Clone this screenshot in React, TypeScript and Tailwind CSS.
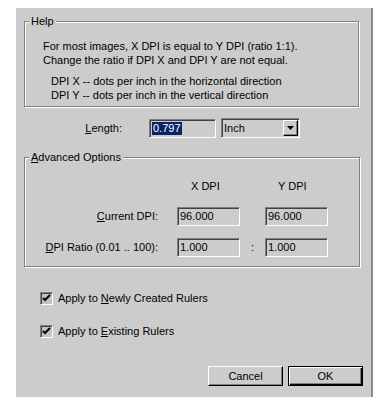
import React from "react";

const sunken =
  "border border-t-[#808080] border-l-[#808080] border-b-white border-r-white shadow-[inset_1px_1px_0_#404040]";

const GroupBox: React.FC<{
  label: React.ReactNode;
  className?: string;
  children?: React.ReactNode;
}> = ({ label, className, children }) => (
  <div
    className={`relative border border-[#808080] shadow-[inset_1px_1px_0_#fff,1px_1px_0_#fff] ${className ?? ""}`}
  >
    <span className="absolute -top-[8px] left-[4px] bg-[#cccccc] px-[2px] leading-[14px]">
      {label}
    </span>
    {children}
  </div>
);

const Field: React.FC<{ value: string; className?: string }> = ({
  value,
  className,
}) => (
  <div
    className={`${sunken} flex items-center pl-[2px] leading-[13px] ${className ?? ""}`}
  >
    {value}
  </div>
);

const CheckRow: React.FC<{ children: React.ReactNode; className?: string }> = ({
  children,
  className,
}) => (
  <div className={`flex items-center gap-[5px] ml-[24px] ${className ?? ""}`}>
    <div
      className={`${sunken} w-[13px] h-[13px] bg-[#c4c4c4] flex items-center justify-center`}
    >
      <svg width="9" height="9" viewBox="0 0 9 9">
        <path d="M1 4 L3 6 L8 1" stroke="#000" strokeWidth="2" fill="none" />
      </svg>
    </div>
    <span className="leading-[14px]">{children}</span>
  </div>
);

export default function App() {
  return (
    <div className="min-h-screen bg-white pt-[8px] pl-[16px] font-['Liberation_Sans',Arial,sans-serif] text-[11px] text-black">
      <div className="w-[357px] h-[389px] bg-[#cccccc] border-r-2 border-[#8a8a8a] flex flex-col">
        {/* Help */}
        <GroupBox label="Help" className="mt-[13px] ml-[8px] w-[335px] h-[86px]">
          <div className="pt-[17px] pl-[18px] leading-[14px]">
            <p>For most images, X DPI is equal to Y DPI (ratio 1:1).</p>
            <p>Change the ratio if DPI X and DPI Y are not equal.</p>
            <div className="mt-[7px] pl-[8px]">
              <p>DPI X -- dots per inch in the horizontal direction</p>
              <p>DPI Y -- dots per inch in the vertical direction</p>
            </div>
          </div>
        </GroupBox>

        {/* Length */}
        <div className="mt-[11px] flex items-center h-[20px]">
          <span className="w-[106px] text-right">
            <u>L</u>ength:
          </span>
          <div className={`${sunken} ml-[27px] w-[67px] h-[19px] flex items-center pl-[2px]`}>
            <span className="bg-[#0a246a] text-white leading-[13px] px-[1px]">0.797</span>
          </div>
          <div className={`${sunken} ml-[5px] w-[79px] h-[20px] flex items-center justify-between pl-[2px] pr-[1px]`}>
            <span>Inch</span>
            <div className="w-[15px] h-[16px] border border-t-white border-l-white border-r-black border-b-black shadow-[inset_-1px_-1px_0_#808080] bg-[#cccccc] flex items-center justify-center">
              <svg width="7" height="4" viewBox="0 0 7 4">
                <path d="M0 0 H7 L3.5 4 Z" fill="#000" />
              </svg>
            </div>
          </div>
        </div>

        {/* Advanced Options */}
        <GroupBox
          label={
            <>
              <u>A</u>dvanced Options
            </>
          }
          className="mt-[19px] ml-[8px] w-[336px] h-[110px]"
        >
          <div className="flex pt-[21px] leading-[14px]">
            <span className="ml-[166px] w-[87px]">X DPI</span>
            <span>Y DPI</span>
          </div>
          <div className="flex items-center mt-[14px]">
            <span className="w-[133px] text-right">
              <u>C</u>urrent DPI:
            </span>
            <Field value="96.000" className="ml-[19px] w-[63px] h-[19px]" />
            <span className="w-[25px]" />
            <Field value="96.000" className="w-[63px] h-[19px]" />
          </div>
          <div className="flex items-center mt-[12px]">
            <span className="w-[133px] text-right">
              <u>D</u>PI Ratio (0.01 .. 100):
            </span>
            <Field value="1.000" className="ml-[19px] w-[63px] h-[19px]" />
            <span className="w-[25px] text-center">:</span>
            <Field value="1.000" className="w-[63px] h-[19px]" />
          </div>
        </GroupBox>

        {/* Checkboxes */}
        <CheckRow className="mt-[24px]">
          Apply to <u>N</u>ewly Created Rulers
        </CheckRow>
        <CheckRow className="mt-[19px]">
          Apply to <u>E</u>xisting Rulers
        </CheckRow>

        {/* Buttons */}
        <div className="mt-auto mb-[11px] flex justify-end gap-[5px] pr-[8px]">
          <button className="w-[75px] h-[20px] bg-[#cccccc] border border-t-white border-l-white border-r-black border-b-black shadow-[inset_-1px_-1px_0_#808080] leading-[14px]">
            Cancel
          </button>
          <button className="w-[75px] h-[20px] bg-[#cccccc] border border-black shadow-[inset_1px_1px_0_#fff,inset_-1px_-1px_0_#000,inset_-2px_-2px_0_#808080] leading-[14px]">
            OK
          </button>
        </div>
      </div>
    </div>
  );
}
